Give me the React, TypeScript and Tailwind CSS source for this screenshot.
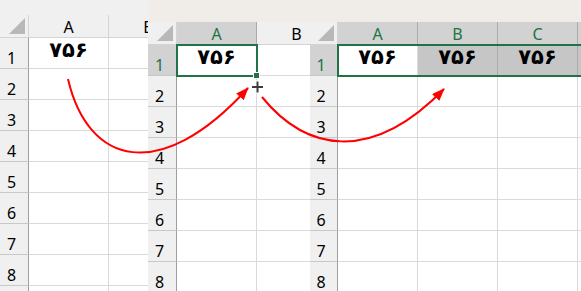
import React from "react";

type Col = { label: string; selected?: boolean; fill?: boolean };

function Panel({
  width,
  topH,
  topBg,
  rhW,
  cols,
  selRow,
  values,
  single,
  multi,
}: {
  width: number;
  topH: string;
  topBg: string;
  rhW: string;
  cols: Col[];
  selRow?: boolean;
  values: number[];
  single?: boolean;
  multi?: boolean;
}) {
  const rows = [1, 2, 3, 4, 5, 6, 7, 8, 9];
  return (
    <div className="shrink-0 h-full overflow-hidden flex flex-col bg-white relative" style={{ width }}>
      <div className={`shrink-0 w-full ${topH} ${topBg}`} />
      <div className="flex shrink-0 h-[23px]">
        <div className={`shrink-0 ${rhW} h-full bg-[#f0f0f0] border-r border-b border-[#d4d4d4] relative`}>
          <div className="absolute right-[3px] bottom-[3px] w-0 h-0 border-l-[16px] border-l-transparent border-b-[16px] border-b-[#b8b8b8]" />
        </div>
        {cols.map((c, i) => (
          <div
            key={i}
            className={`shrink-0 w-[80px] h-full border-r border-b flex items-center justify-center pt-[2px] text-[16px] leading-[18px] ${
              c.selected
                ? "bg-[#d2d2d2] text-[#217346] border-r-[#ababab] border-b-[#ababab]"
                : "bg-[#f0f0f0] text-black border-[#d4d4d4]"
            }`}
            style={{ fontFamily: "'Segoe UI', 'Noto Sans', 'Open Sans', sans-serif" }}
          >
            {c.label}
          </div>
        ))}
      </div>
      <div className="relative flex flex-col">
        {rows.map((r) => (
          <div key={r} className="flex shrink-0 h-[31px]">
            <div
              className={`shrink-0 ${rhW} h-full border-r border-r-[#9e9e9e] border-b border-b-[#c8c8c8] flex items-end justify-center pr-[5px] text-[16px] leading-[20px] ${
                r === 1 && selRow ? "bg-[#d2d2d2] text-[#217346]" : "bg-[#f0f0f0] text-black"
              }`}
              style={{ fontFamily: "'Segoe UI', 'Noto Sans', 'Open Sans', sans-serif" }}
            >
              {r}
            </div>
            {cols.map((c, i) => {
              const has = r === 1 && values.includes(i);
              const fill = r === 1 && c.fill;
              const sel1 = single && r === 1 && i === 0;
              return (
                <div
                  key={i}
                  className={`shrink-0 w-[80px] h-full border-r border-b flex items-end justify-center pb-[8px] ${
                    fill ? "bg-[#c6c6c6] border-[#ababab]" : "bg-white border-[#dadada]"
                  } ${sel1 ? "outline-2 outline-[#217346] -outline-offset-1 relative" : ""}`}
                >
                  {has && (
                    <span
                      dir="rtl"
                      className="text-[21px] leading-[20px] font-bold text-black"
                      style={{ fontFamily: "'DejaVu Sans', 'Noto Sans', sans-serif" }}
                    >
                      ۷۵۶
                    </span>
                  )}
                  {sel1 && (
                    <div className="absolute right-[-4px] bottom-[-4px] w-[7px] h-[7px] bg-[#217346] border border-white" />
                  )}
                </div>
              );
            })}
          </div>
        ))}
        {multi && (
          <div className="absolute left-[27px] top-[-1px] w-[400px] h-[33px] border-2 border-[#217346] pointer-events-none" />
        )}
      </div>
    </div>
  );
}

export default function App() {
  return (
    <div className="relative w-[581px] h-[291px] overflow-hidden flex bg-white">
      <Panel
        width={148}
        topH="h-[15px]"
        topBg="bg-[#f0f0f0]"
        rhW="w-[29px]"
        cols={[{ label: "A" }, { label: "B" }]}
        values={[0]}
      />
      <Panel
        width={162}
        topH="h-[22px]"
        topBg="bg-[#f0ece8]"
        rhW="w-[29px]"
        cols={[{ label: "A", selected: true }, { label: "B" }]}
        selRow
        values={[0]}
        single
      />
      <Panel
        width={271}
        topH="h-[22px]"
        topBg="bg-[#f0ece8]"
        rhW="w-[28px]"
        cols={[
          { label: "A", selected: true },
          { label: "B", selected: true, fill: true },
          { label: "C", selected: true, fill: true },
          { label: "D", selected: true, fill: true },
        ]}
        selRow
        values={[0, 1, 2]}
        multi
      />
      <svg className="absolute inset-0 pointer-events-none" width="581" height="291" viewBox="0 0 581 291">
        <defs>
          <marker id="ah" markerUnits="userSpaceOnUse" markerWidth="14" markerHeight="12" refX="12" refY="5" orient="auto">
            <path d="M0 0 L13 5 L0 10 Z" fill="#ff0000" />
          </marker>
        </defs>
        <path d="M68 79 C 88 165, 160 185, 248 88" fill="none" stroke="#ff0000" strokeWidth="2" markerEnd="url(#ah)" />
        <path d="M262 97 C 305 150, 370 165, 444 89" fill="none" stroke="#ff0000" strokeWidth="2" markerEnd="url(#ah)" />
        <g>
          <rect x="251" y="85" width="13" height="4" fill="#ffffff" />
          <rect x="255.5" y="80.5" width="4" height="13" fill="#ffffff" />
          <rect x="252" y="86" width="11" height="2" fill="#3c3c3c" />
          <rect x="256.5" y="81.5" width="2" height="11" fill="#3c3c3c" />
        </g>
      </svg>
    </div>
  );
}
